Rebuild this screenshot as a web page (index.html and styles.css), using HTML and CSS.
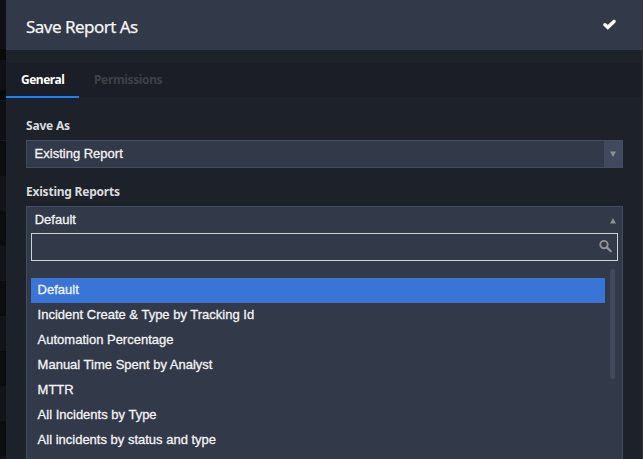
FILE: index.html
```html
<!DOCTYPE html>
<html lang="en">
<head>
<meta charset="utf-8">
<title>Save Report As</title>
<link rel="stylesheet" href="styles.css">
</head>
<body>
<div class="backdrop"></div>
<main class="panel">
  <header class="header">
    <h1 class="title">Save Report As</h1>
    <svg class="check" viewBox="0 0 13 11" width="13" height="11"><path d="M2 5.7 4.8 8.3 11 2.4" fill="none" stroke="#fff" stroke-width="3.4" stroke-linecap="round"/></svg>
  </header>
  <nav class="tabs">
    <a class="tab active"><span class="general">General</span></a>
    <a class="tab"><span class="permissions">Permissions</span></a>
  </nav>
  <section class="form">
    <div class="label save-label">Save As</div>
    <div class="select"><span class="value">Existing Report</span><span class="arrow"><svg width="6" height="6" viewBox="0 0 6 6"><path d="M0 0.5H6L3 6Z" fill="#8f9090"/></svg></span></div>
    <div class="label reports-label">Existing Reports</div>
    <div class="dropdown">
      <div class="current"><span>Default</span><svg width="6" height="6" viewBox="0 0 6 6"><path d="M0 5.5H6L3 0Z" fill="#8f9090"/></svg></div>
      <div class="search"><svg width="13" height="13" viewBox="0 0 13 13" fill="none" stroke="#929394"><circle cx="5" cy="4.6" r="3.7" stroke-width="1.9"/><path d="m7.8 7.4 4 3.9" stroke-width="2.2" stroke-linecap="round"/></svg></div>
      <div class="results">
        <ul class="list">
          <li class="selected">Default</li>
          <li>Incident Create &amp; Type by Tracking Id</li>
          <li>Automation Percentage</li>
          <li>Manual Time Spent by Analyst</li>
          <li>MTTR</li>
          <li>All Incidents by Type</li>
          <li>All incidents by status and type</li>
        </ul>
        <div class="thumb"></div>
      </div>
    </div>
  </section>
</main>
<div class="edge"></div>
</body>
</html>
```
FILE: styles.css
```css
* { box-sizing: border-box; }
body {
  margin: 0; width: 643px; height: 459px; overflow: hidden; display: flex;
  background: #1d2129; color: #f2f3f5; font-family: "Liberation Sans", Arial, sans-serif;
}
.backdrop {
  width: 6px; height: 459px; flex: none;
  background: linear-gradient(#0e1015 0 49px, #08090b 49px 60px, #0f1116 60px 90px, #08090b 90px 100px, #15181d 100px 101px, #0e1015 101px 140px, #171a20 140px 141px, #0b0c10 141px 176px, #111519 176px 211px, #0b0c10 211px 246px, #111519 246px 281px, #0b0c10 281px 316px, #111519 316px 351px, #0b0c10 351px 386px, #111519 386px 421px, #0b0c10 421px 456px, #111519 456px);
}
.panel { width: 636px; flex: none; background: #1d2129; }
.edge { width: 1px; background: #2c313a; }
.header {
  height: 50px; padding: 0 26px 0 20px; background: #323948;
  display: flex; justify-content: space-between;
}
.title {
  margin: 0; padding-top: 4px; font: 400 17px/46px "Noto Sans", sans-serif;
  letter-spacing: -.52px; white-space: nowrap; color: #f4f5f6;
  -webkit-text-stroke: .25px;
}
.check { margin-top: 19px; }
.tabs {
  height: 48px; display: flex; font: 700 12px/35px "Noto Sans", sans-serif;
  background: linear-gradient(#1d2129 0 13px, #1b1e26 13px 47px, #1d2129 47px);
}
.tab { padding: 12px 15px 0; color: #3d4148; white-space: nowrap; }
.active { width: 73px; color: #fff; border-bottom: 2px solid #1683fc; }
.general { letter-spacing: -.5px; }
.permissions { letter-spacing: -.36px; }
.form { padding: 18px 19px 0 20px; }
.label { font: 700 12px/20px "Noto Sans", sans-serif; color: #d8dbdf; white-space: nowrap; }
.save-label { height: 24px; letter-spacing: -.2px; }
.reports-label { height: 24px; margin-top: 14px; letter-spacing: -.22px; }
.select {
  height: 28px; border: 1px solid #424d62; background: #323948;
  display: flex; justify-content: space-between; font-size: 13px; line-height: 26px;
}
.value, .current span, .list li { -webkit-text-stroke: .3px; }
.value { padding-left: 7.6px; }
.arrow { width: 18px; background: #414a5d; display: flex; align-items: center; justify-content: center; }
.dropdown {
  height: 260px; padding: 0 4px; border: 1px solid #424d62; border-bottom: 0;
  background: #323948; font-size: 13px;
}
.current { height: 26px; padding: 0 2px 0 3.7px; line-height: 26px; display: flex; justify-content: space-between; }
.current svg { margin-top: 11px; }
.search { height: 28px; border: 1px solid #d0d1d1; display: flex; justify-content: flex-end; padding: 6px 5px 0 0; }
.results { display: flex; justify-content: space-between; padding-right: 3px; }
.list { width: 574px; margin: 17px 0 0; padding: 0; list-style: none; line-height: 24px; }
.list li { height: 25px; padding-left: 6.6px; }
.selected { background: #3875d7; }
.thumb { width: 5px; height: 110px; margin-top: 8px; border-radius: 2px; background: #414a5d; }
```
